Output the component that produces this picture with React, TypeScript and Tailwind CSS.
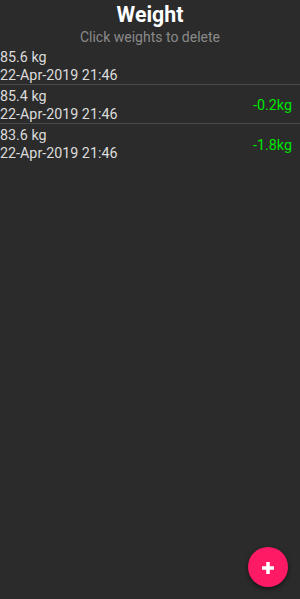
import React from "react";

const rows = [
  { w: "85.6 kg", d: "22-Apr-2019 21:46", diff: "" },
  { w: "85.4 kg", d: "22-Apr-2019 21:46", diff: "-0.2kg" },
  { w: "83.6 kg", d: "22-Apr-2019 21:46", diff: "-1.8kg" },
];

export default function App() {
  return (
    <div
      className="relative w-[300px] h-[599px] bg-[#2b2b2b] overflow-hidden"
      style={{ fontFamily: "Roboto, 'Noto Sans', sans-serif" }}
    >
      <div className="h-[46px] pt-[2px] flex flex-col items-center">
        <div className="text-[21.3px] leading-[25px] font-bold text-white">Weight</div>
        <div className="mt-[2px] text-[14px] leading-[17px] text-[#8a8a8a]">
          Click weights to delete
        </div>
      </div>
      <div>
        {rows.map((r, i) => (
          <div
            key={i}
            className={`flex justify-between h-[39px] ${i < rows.length - 1 ? "border-b border-[#4a4a4a]" : ""}`}
          >
            <div className="pt-[1.5px] text-[14.3px] leading-[18.5px] text-[#dcdcdc]">
              <div>{r.w}</div>
              <div>{r.d}</div>
            </div>
            <div className="self-center pt-[3px] text-[14.3px] leading-[18.5px] text-[#00e600] pr-[8px]">{r.diff}</div>
          </div>
        ))}
      </div>
      <button className="absolute left-[248px] top-[547px] w-[40px] h-[40px] rounded-full bg-[#ff1a66] shadow-[0_2px_4px_rgba(0,0,0,0.5)] flex items-center justify-center">
        <svg width="12" height="12" viewBox="0 0 12 12" className="mt-[1px]">
          <rect x="4.25" y="0" width="3.5" height="12" fill="white" />
          <rect x="0" y="4.25" width="12" height="3.5" fill="white" />
        </svg>
      </button>
    </div>
  );
}
